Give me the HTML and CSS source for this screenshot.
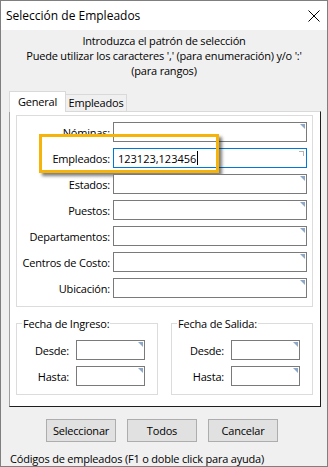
FILE: index.html
```html
<!DOCTYPE html>
<html lang="es">
<head>
    <meta charset="UTF-8">
    <meta name="viewport" content="width=device-width, initial-scale=1.0">
    <title>Selección de Empleados</title>
    <link rel="stylesheet" href="styles.css">
</head>
<body>
    <div class="window">
        <div class="titlebar">
            <span class="title">Selección de Empleados</span>
            <svg class="close" width="12" height="12" viewBox="0 0 12 12">
                <path d="M0.5 0.5 L11.5 11.5 M11.5 0.5 L0.5 11.5" stroke="#000" stroke-width="1" fill="none"/>
            </svg>
        </div>

        <div class="intro">
            <p>Introduzca el patrón de selección</p>
            <p>Puede utilizar los caracteres ',' (para enumeración) y/o ':'<br>(para rangos)</p>
        </div>

        <div class="tabs">
            <div class="tab active">General</div>
            <div class="tab">Empleados</div>
        </div>

        <div class="panel">
            <div class="group fields">
                <div class="row"><span class="label">Nóminas:</span><div class="box"></div></div>
                <div class="row">
                    <span class="label">Empleados:</span>
                    <div class="box focused"><span class="value">123123,123456</span><span class="caret"></span></div>
                    <div class="highlight"></div>
                </div>
                <div class="row"><span class="label">Estados:</span><div class="box"></div></div>
                <div class="row"><span class="label">Puestos:</span><div class="box"></div></div>
                <div class="row"><span class="label">Departamentos:</span><div class="box"></div></div>
                <div class="row"><span class="label">Centros de Costo:</span><div class="box"></div></div>
                <div class="row"><span class="label">Ubicación:</span><div class="box"></div></div>
            </div>

            <div class="dates">
                <fieldset class="date-group">
                    <legend>Fecha de Ingreso:</legend>
                    <div class="row"><span class="label">Desde:</span><div class="box small"></div></div>
                    <div class="row"><span class="label">Hasta:</span><div class="box small"></div></div>
                </fieldset>
                <fieldset class="date-group">
                    <legend>Fecha de Salida:</legend>
                    <div class="row"><span class="label">Desde:</span><div class="box small"></div></div>
                    <div class="row"><span class="label">Hasta:</span><div class="box small"></div></div>
                </fieldset>
            </div>
        </div>

        <div class="buttons">
            <button class="btn">Seleccionar</button>
            <button class="btn">Todos</button>
            <button class="btn">Cancelar</button>
        </div>

        <div class="status">Códigos de empleados (F1 o doble click para ayuda)</div>
    </div>
</body>
</html>
```

FILE: styles.css
```css
body {
    margin: 0;
    padding: 0;
    font-family: "Open Sans", "Noto Sans", sans-serif;
    font-size: 11px;
    letter-spacing: -0.2px;
    color: #000;
}

.window {
    width: 328px;
    height: 467px;
    box-sizing: border-box;
    border: 1px solid #7f7f7f;
    background-color: #f0f0f0;
    display: flex;
    flex-direction: column;
}

.titlebar {
    height: 29px;
    background-color: #fff;
    display: flex;
    align-items: center;
    justify-content: space-between;
    padding: 0 7px 0 5px;
}

.title {
    font-size: 12px;
    letter-spacing: 0;
}

.intro {
    text-align: center;
    padding-top: 3px;
    line-height: 15px;
}

.intro p {
    margin: 0;
}

/* tab strip */
.tabs {
    display: flex;
    align-items: flex-end;
    margin-top: 13px;
    padding-left: 8px;
}

.tab {
    box-sizing: border-box;
    border: 1px solid #d9d9d9;
    border-bottom: none;
    text-align: center;
}

.tab.active {
    width: 57px;
    height: 21px;
    line-height: 19px;
    background-color: #fff;
    margin-bottom: -1px;
    position: relative;
    z-index: 1;
}

.tab:not(.active) {
    width: 61px;
    height: 17px;
    line-height: 16px;
    border-left: none;
    background-color: #f0f0f0;
}

.panel {
    margin: 0 6px 0 8px;
    height: 296px;
    box-sizing: border-box;
    background-color: #fff;
    border: 1px solid #d9d9d9;
    border-left-color: #a0a0a0;
    border-right-color: #1e1e1e;
    border-bottom-color: #1e1e1e;
}

.group {
    border: 1px solid #dcdcdc;
}

.fields {
    margin: 3px 7px 0 6px;
    padding: 6px 5px 8px 0;
    display: flex;
    flex-direction: column;
    gap: 6px;
}

.row {
    display: flex;
    align-items: center;
    position: relative;
}

.label {
    width: 93px;
    text-align: right;
    margin-right: 3px;
    white-space: nowrap;
}

.box {
    width: 194px;
    height: 20px;
    box-sizing: border-box;
    border: 1px solid #7a7a7a;
    background-color: #fff;
    position: relative;
    display: flex;
    align-items: center;
}

.box::after {
    content: "";
    position: absolute;
    top: 1px;
    right: 1px;
    width: 0;
    height: 0;
    border-top: 5px solid #8ea7c7;
    border-left: 5px solid transparent;
}

.box.focused {
    border-color: #0078d7;
}

.box.focused::after {
    top: 2px;
    right: 2px;
    width: 4px;
    height: 4px;
    border: none;
    border-top: 1px solid #b4b4b4;
    border-right: 1px solid #b4b4b4;
}

.value {
    padding-left: 4px;
    letter-spacing: 0;
}

.caret {
    width: 1px;
    height: 14px;
    margin-left: 1px;
    background-color: #000;
}

/* yellow callout drawn over the Empleados row */
.highlight {
    position: absolute;
    left: 22px;
    top: -14px;
    width: 180px;
    height: 39px;
    box-sizing: border-box;
    border: 3px solid #f6b40a;
    box-shadow: 3px 3px 3px rgba(0, 0, 0, 0.5);
    pointer-events: none;
}

.dates {
    display: flex;
    gap: 13px;
    margin: 9px 7px 0 6px;
}

.date-group {
    width: 142px;
    box-sizing: border-box;
    margin: 0;
    padding: 9px 12px 8px 0;
    border: 1px solid #dcdcdc;
    display: flex;
    flex-direction: column;
    gap: 6px;
}

.date-group legend {
    padding: 0 1px;
    margin-left: 5px;
    line-height: 15px;
}

.date-group .label {
    width: 52px;
    margin-right: 7px;
}

.box.small {
    width: 69px;
}

.buttons {
    display: flex;
    gap: 11px;
    margin-top: 12px;
    padding-left: 45px;
}

.btn {
    width: 70px;
    height: 23px;
    padding: 0;
    font-family: inherit;
    font-size: 11px;
    letter-spacing: -0.2px;
    color: #000;
    background-color: #e1e1e1;
    border: 1px solid #adadad;
    border-radius: 0;
}

.status {
    margin-top: 9px;
    padding-left: 9px;
    line-height: 15px;
}
```
